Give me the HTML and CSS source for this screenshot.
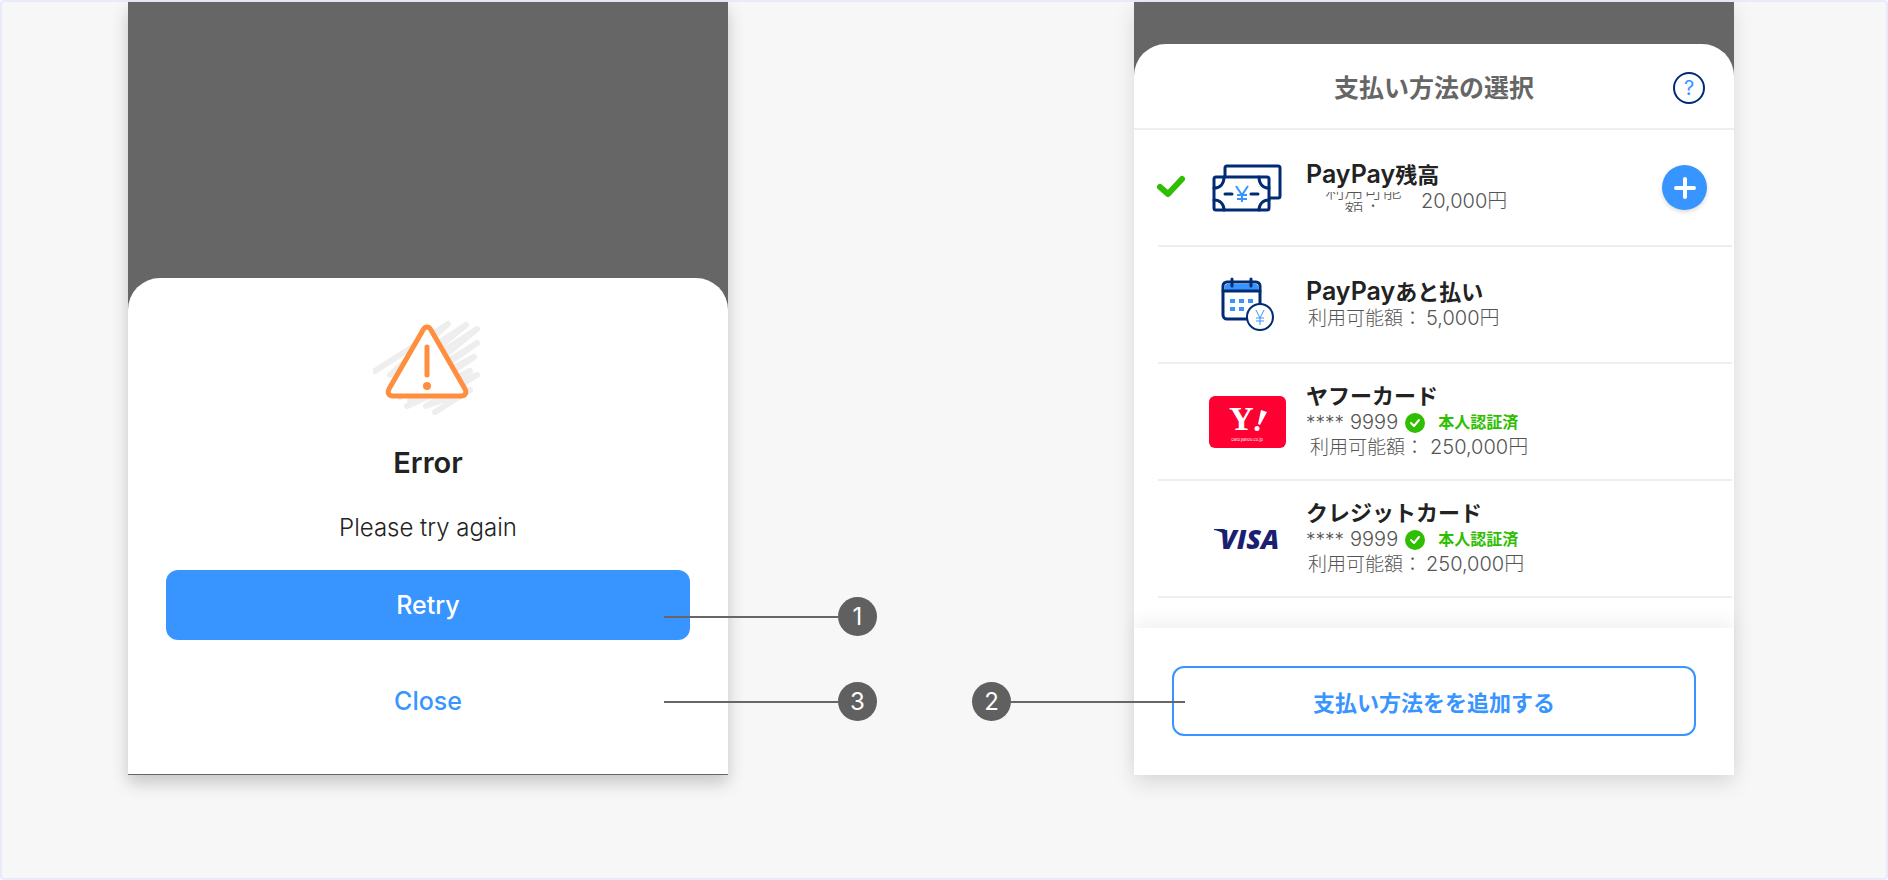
FILE: index.html
```
<!DOCTYPE html>
<html lang="ja">
<head>
    <meta charset="UTF-8">
    <meta name="viewport" content="width=device-width, initial-scale=1.0">
    <title>支払い方法の選択</title>
    <link rel="stylesheet" href="styles.css">
</head>
<body>
    <main class="board">
        <!-- エラー画面 -->
        <section class="phone phone-error">
            <div class="sheet error-sheet">
                <svg class="warning-icon" width="110" height="96" viewBox="373 319 110 96" fill="none">
                    <path d="M375 371L448 324L390 375L466 325L400 379L477 329L404 389L477 343L400 397L474 357L410 400L470 371L407 406L477 375L426 406L470 390L435 412" stroke="#eee" stroke-width="6" stroke-linecap="round" stroke-linejoin="round"/>
                    <path d="M423 330c2-4 6-4 8 0l34 59c2 4 0 7-4 7h-68c-4 0-6-3-4-7z" fill="#fff" stroke="#ff8f3f" stroke-width="5"/>
                    <path d="M427 347v28" stroke="#ff8f3f" stroke-width="5" stroke-linecap="round"/>
                    <circle cx="427" cy="386" r="4" fill="#ff8f3f"/>
                </svg>
                <h1>Error</h1>
                <p>Please try again</p>
                <button type="button" class="btn btn-primary">Retry</button>
                <button type="button" class="btn btn-text">Close</button>
            </div>
            <div class="callout callout-retry"><i></i><b>1</b></div>
            <div class="callout callout-close"><i></i><b>3</b></div>
        </section>

        <!-- 支払い方法の選択画面 -->
        <section class="phone phone-payment">
            <div class="sheet payment-sheet">
                <header class="sheet-header">
                    <h2>支払い方法の選択</h2>
                    <button type="button" class="help" aria-label="ヘルプ">?</button>
                </header>
                <ul class="methods">
                    <li>
                        <span class="check">
                            <svg width="30" height="24" viewBox="0 0 30 24" fill="none" stroke="#30be02" stroke-width="6" stroke-linecap="round" stroke-linejoin="round"><path d="M2 13l8 7L24 5"/></svg>
                        </span>
                        <span class="logo">
                            <svg width="70" height="48" viewBox="0 0 70 48" fill="none" stroke="#002b75" stroke-width="3">
                                <path d="M13 12V4a2 2 0 0 1 2-2h51a2 2 0 0 1 2 2v28a2 2 0 0 1-2 2h-8"/>
                                <rect x="2" y="13" width="55" height="33" rx="2"/>
                                <path d="M2 24c6 0 10-4 10-11M57 24c-6 0-10-4-10-11M2 36c6 0 10 4 10 10M57 36c-6 0-10 4-10 10M13 30h7M39 30h7" stroke-linecap="round"/>
                                <path d="M24 22l6 9 6-9M30 31v7M25 31h10M25 35h10" stroke="#3895ff" stroke-width="2"/>
                            </svg>
                        </span>
                        <div class="info">
                            <h3><span>PayPay</span>残高</h3>
                            <p><span class="label-clip"><span>利用可能額：</span></span>20,000円</p>
                        </div>
                        <button type="button" class="plus" aria-label="チャージ">
                            <svg width="24" height="24" viewBox="0 0 24 24" stroke="#fff" stroke-width="4" stroke-linecap="round"><path d="M12 3v18M3 12h18"/></svg>
                        </button>
                    </li>
                    <li>
                        <span class="check"></span>
                        <span class="logo">
                            <svg width="54" height="56" viewBox="-1 0 54 56" fill="none" stroke="#002b75" stroke-width="3">
                                <rect x="2" y="5" width="37" height="37" rx="4"/>
                                <path d="M4 14V9a2 2 0 0 1 2-2h29a2 2 0 0 1 2 2v5z" fill="#3895ff" stroke="none"/>
                                <path d="M2 14h37M11 2v7M30 2v7" stroke-linecap="round"/>
                                <path d="M9 22h5v4H9zM18 22h5v4h-5zM27 22h5v4h-5zM9 30h5v4H9zM18 30h5v4h-5z" fill="#3895ff" stroke="none"/>
                                <circle cx="39" cy="40" r="13" fill="#fff" stroke-width="2"/>
                                <path d="M35 33l4 8 4-8M39 41v7M35 41h8M35 44h8" stroke="#3895ff" stroke-width="1"/>
                            </svg>
                        </span>
                        <div class="info">
                            <h3><span>PayPay</span>あと払い</h3>
                            <p><span class="label">利用可能額：</span>5,000円</p>
                        </div>
                    </li>
                    <li>
                        <span class="check"></span>
                        <span class="logo">
                            <svg width="77" height="52" viewBox="0 0 77 52">
                                <rect width="77" height="52" rx="6" fill="#ff0033"/>
                                <text class="yahoo-mark" x="20" y="34">Y</text>
                                <path d="M52 14l6 2-7 13-2-1zM48 30a2 2 0 1 1 0 5 2 2 0 0 1 0-5z" fill="#fff"/>
                                <text class="yahoo-url" x="38" y="45">card.yahoo.co.jp</text>
                            </svg>
                        </span>
                        <div class="info">
                            <h3>ヤフーカード</h3>
                            <p>
                                <span class="mask">****</span>9999
                                <svg class="badge" width="20" height="20" viewBox="0 0 20 20" fill="none"><circle cx="10" cy="10" r="10" fill="#30be02"/><path d="M6 10l3 3 5-6" stroke="#fff" stroke-width="2" stroke-linecap="round" stroke-linejoin="round"/></svg>
                                <strong>本人認証済</strong>
                            </p>
                            <p><span class="label label-wide">利用可能額：</span>250,000円</p>
                        </div>
                    </li>
                    <li>
                        <span class="check"></span>
                        <span class="logo">
                            <svg width="72" height="44" viewBox="-3 -10 72 44">
                                <text class="visa-mark" x="6" y="22">VISA</text>
                                <path d="M0 2h9c2 0 3 1 3 3l1 7C11 7 7 4 0 3z" fill="#1a1f71"/>
                            </svg>
                        </span>
                        <div class="info">
                            <h3>クレジットカード</h3>
                            <p>
                                <span class="mask">****</span>9999
                                <svg class="badge" width="20" height="20" viewBox="0 0 20 20" fill="none"><circle cx="10" cy="10" r="10" fill="#30be02"/><path d="M6 10l3 3 5-6" stroke="#fff" stroke-width="2" stroke-linecap="round" stroke-linejoin="round"/></svg>
                                <strong>本人認証済</strong>
                            </p>
                            <p><span class="label">利用可能額：</span>250,000円</p>
                        </div>
                    </li>
                </ul>
                <footer class="sheet-footer">
                    <button type="button" class="btn btn-outline">支払い方法をを追加する</button>
                </footer>
            </div>
            <div class="callout callout-add"><b>2</b><i></i></div>
        </section>
    </main>
</body>
</html>
```

FILE: styles.css
```
* {
    box-sizing: border-box;
}
body {
    margin: 0;
    font-family: Inter, "Noto Sans CJK JP", sans-serif;
    color: #222;
    background-color: #fff;
}
h1, h2, h3, p, ul {
    margin: 0;
    padding: 0;
}
button {
    font-family: inherit;
    padding: 0;
    border: none;
    cursor: pointer;
}
.board {
    display: grid;
    grid-template-columns: 126fr 600fr 406fr 600fr 152fr;
    align-items: start;
    min-height: 100vh;
    border: 2px solid #e8ecf8;
    border-radius: 4px;
    background-color: #f7f7f7;
}

/* 端末 */
.phone {
    position: relative;
    background-color: #666;
    box-shadow: 0 8px 16px rgba(0, 0, 0, 0.2);
}
.phone-error {
    grid-column: 2;
    padding: 276px 0 1px;
}
.phone-payment {
    grid-column: 4;
    padding-top: 42px;
    box-shadow: 0 8px 20px rgba(0, 0, 0, 0.12);
}
.sheet {
    background-color: #fff;
    border-radius: 32px 32px 0 0;
}

/* ボタン */
.btn {
    display: block;
    width: 100%;
    height: 70px;
    border-radius: 12px;
    font-size: 25px;
    font-weight: 500;
}
.btn-primary {
    background-color: #3895ff;
    color: #fff;
}
.btn-text {
    background: none;
    color: #3895ff;
}
.btn-outline {
    background-color: #fff;
    border: 2px solid #3895ff;
    color: #3895ff;
    font-size: 22px;
    font-weight: 700;
}

/* エラー */
.error-sheet {
    padding: 41px 38px 38px;
    text-align: center;
}
.warning-icon {
    display: block;
    margin: 0 auto;
}
.error-sheet h1 {
    margin-top: 32px;
    font-size: 29px;
    line-height: 32px;
    font-weight: 600;
}
.error-sheet p {
    margin: 33px 0 26px;
    font-size: 24px;
    line-height: 32px;
    font-weight: 300;
}
.btn-text {
    margin-top: 26px;
}

/* 支払い方法 */
.sheet-header {
    position: relative;
    display: flex;
    align-items: center;
    justify-content: center;
    height: 86px;
    padding-top: 4px;
    border-bottom: 2px solid #eee;
}
.sheet-header h2 {
    font-size: 25px;
    line-height: 32px;
    font-weight: 700;
    color: #666;
}
.help {
    position: absolute;
    right: 29px;
    width: 32px;
    height: 32px;
    border: 2px solid #002b75;
    border-radius: 50%;
    background: none;
    color: #3895ff;
    font-size: 20px;
    line-height: 28px;
}
.methods {
    list-style: none;
    margin: 0 2px 0 24px;
}
.methods li {
    display: flex;
    align-items: center;
    height: 117px;
    border-bottom: 2px solid #eee;
}
.check {
    width: 30px;
}
.check svg {
    overflow: visible;
}
.logo {
    display: flex;
    justify-content: center;
    width: 118px;
}
.info {
    flex: 1;
}
.info h3 {
    font-size: 22px;
    line-height: 27px;
    font-weight: 600;
}
.info h3 span {
    font-size: 25px;
}
.info p {
    display: flex;
    align-items: center;
    font-size: 20px;
    line-height: 25px;
    font-weight: 300;
    color: #555;
}
.info strong {
    margin-left: 13px;
    font-size: 16px;
    font-weight: 700;
    color: #30be02;
}
.mask {
    margin-right: 6px;
    font-size: 19px;
}
.badge {
    margin-left: 7px;
}
.label {
    width: 120px;
    padding-left: 2px;
    font-size: 19px;
    white-space: nowrap;
}
.label-wide {
    width: 124px;
    padding-left: 4px;
}
/* 幅が足りず折り返すラベル */
.label-clip {
    display: flex;
    align-items: center;
    width: 115px;
    height: 20px;
    padding: 0 16px;
    overflow: hidden;
    font-size: 19px;
    line-height: 20px;
    text-align: center;
}
.plus {
    display: flex;
    align-items: center;
    justify-content: center;
    width: 45px;
    height: 45px;
    margin-right: 25px;
    border-radius: 50%;
    background-color: #3895ff;
    box-shadow: 0 2px 4px rgba(0, 0, 0, 0.15);
}
.yahoo-mark {
    font-family: "Liberation Serif", serif;
    font-size: 34px;
    font-weight: 700;
    fill: #fff;
}
.yahoo-url {
    font-size: 4px;
    text-anchor: middle;
    fill: #fff;
}
.visa-mark {
    font-family: "Open Sans", sans-serif;
    font-size: 27px;
    font-style: italic;
    font-weight: 800;
    fill: #1a1f71;
}
.sheet-footer {
    margin-top: 30px;
    padding: 38px 38px 39px;
    background-color: #fff;
    box-shadow: 0 -8px 16px rgba(0, 0, 0, 0.05);
}

/* 番号付きの引き出し線 */
.callout {
    position: absolute;
    display: flex;
    align-items: center;
}
.callout i {
    width: 174px;
    height: 2px;
    background-color: #666;
}
.callout b {
    width: 39px;
    height: 39px;
    border-radius: 50%;
    background-color: #606060;
    color: #fff;
    font-size: 24px;
    line-height: 39px;
    font-weight: 400;
    text-align: center;
}
.callout-retry, .callout-close {
    left: calc(100% - 64px);
}
.callout-retry {
    bottom: 139px;
}
.callout-close {
    bottom: 54px;
}
.callout-add {
    right: calc(100% - 51px);
    bottom: 54px;
}
```
